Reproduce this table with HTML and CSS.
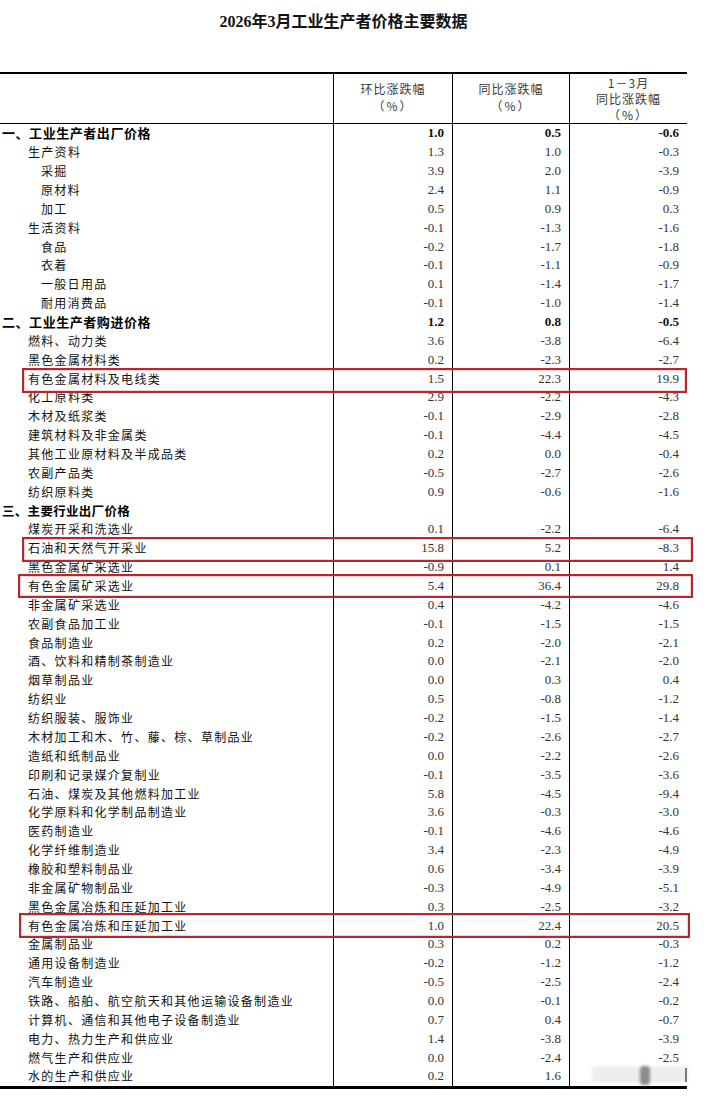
FILE: index.html
```html
<!DOCTYPE html>
<html lang="zh-CN">
<head>
<meta charset="utf-8">
<title>2026年3月工业生产者价格主要数据</title>
<link rel="stylesheet" href="styles.css">
</head>
<body>
<div class="sheet">
  <h1 class="title">2026年3月工业生产者价格主要数据</h1>
  <table class="ppi">
    <colgroup>
      <col class="c-label"><col class="c-a"><col class="c-b"><col class="c-c">
    </colgroup>
    <thead>
      <tr>
        <th class="h-label"></th>
        <th><span class="hd">环比涨跌幅<br><span class="pct">（%）</span></span></th>
        <th><span class="hd">同比涨跌幅<br><span class="pct">（%）</span></span></th>
        <th>1－3月<br>同比涨跌幅<br><span class="pct">（%）</span></th>
      </tr>
    </thead>
    <tbody>
      <tr class="sec"><td class="lab l0">一、工业生产者出厂价格</td><td>1.0</td><td>0.5</td><td>-0.6</td></tr>
      <tr><td class="lab l1">生产资料</td><td>1.3</td><td>1.0</td><td>-0.3</td></tr>
      <tr><td class="lab l2">采掘</td><td>3.9</td><td>2.0</td><td>-3.9</td></tr>
      <tr><td class="lab l2">原材料</td><td>2.4</td><td>1.1</td><td>-0.9</td></tr>
      <tr><td class="lab l2">加工</td><td>0.5</td><td>0.9</td><td>0.3</td></tr>
      <tr><td class="lab l1">生活资料</td><td>-0.1</td><td>-1.3</td><td>-1.6</td></tr>
      <tr><td class="lab l2">食品</td><td>-0.2</td><td>-1.7</td><td>-1.8</td></tr>
      <tr><td class="lab l2">衣着</td><td>-0.1</td><td>-1.1</td><td>-0.9</td></tr>
      <tr><td class="lab l2">一般日用品</td><td>0.1</td><td>-1.4</td><td>-1.7</td></tr>
      <tr><td class="lab l2">耐用消费品</td><td>-0.1</td><td>-1.0</td><td>-1.4</td></tr>
      <tr class="sec"><td class="lab l0">二、工业生产者购进价格</td><td>1.2</td><td>0.8</td><td>-0.5</td></tr>
      <tr><td class="lab l1">燃料、动力类</td><td>3.6</td><td>-3.8</td><td>-6.4</td></tr>
      <tr><td class="lab l1">黑色金属材料类</td><td>0.2</td><td>-2.3</td><td>-2.7</td></tr>
      <tr><td class="lab l1">有色金属材料及电线类</td><td>1.5</td><td>22.3</td><td>19.9</td></tr>
      <tr><td class="lab l1">化工原料类</td><td>2.9</td><td>-2.2</td><td>-4.3</td></tr>
      <tr><td class="lab l1">木材及纸浆类</td><td>-0.1</td><td>-2.9</td><td>-2.8</td></tr>
      <tr><td class="lab l1">建筑材料及非金属类</td><td>-0.1</td><td>-4.4</td><td>-4.5</td></tr>
      <tr><td class="lab l1">其他工业原材料及半成品类</td><td>0.2</td><td>0.0</td><td>-0.4</td></tr>
      <tr><td class="lab l1">农副产品类</td><td>-0.5</td><td>-2.7</td><td>-2.6</td></tr>
      <tr><td class="lab l1">纺织原料类</td><td>0.9</td><td>-0.6</td><td>-1.6</td></tr>
      <tr class="sec"><td class="lab l0 s3">三、主要行业出厂价格</td><td></td><td></td><td></td></tr>
      <tr><td class="lab l1">煤炭开采和洗选业</td><td>0.1</td><td>-2.2</td><td>-6.4</td></tr>
      <tr><td class="lab l1">石油和天然气开采业</td><td>15.8</td><td>5.2</td><td>-8.3</td></tr>
      <tr><td class="lab l1">黑色金属矿采选业</td><td>-0.9</td><td>0.1</td><td>1.4</td></tr>
      <tr><td class="lab l1">有色金属矿采选业</td><td>5.4</td><td>36.4</td><td>29.8</td></tr>
      <tr><td class="lab l1">非金属矿采选业</td><td>0.4</td><td>-4.2</td><td>-4.6</td></tr>
      <tr><td class="lab l1">农副食品加工业</td><td>-0.1</td><td>-1.5</td><td>-1.5</td></tr>
      <tr><td class="lab l1">食品制造业</td><td>0.2</td><td>-2.0</td><td>-2.1</td></tr>
      <tr><td class="lab l1">酒、饮料和精制茶制造业</td><td>0.0</td><td>-2.1</td><td>-2.0</td></tr>
      <tr><td class="lab l1">烟草制品业</td><td>0.0</td><td>0.3</td><td>0.4</td></tr>
      <tr><td class="lab l1">纺织业</td><td>0.5</td><td>-0.8</td><td>-1.2</td></tr>
      <tr><td class="lab l1">纺织服装、服饰业</td><td>-0.2</td><td>-1.5</td><td>-1.4</td></tr>
      <tr><td class="lab l1">木材加工和木、竹、藤、棕、草制品业</td><td>-0.2</td><td>-2.6</td><td>-2.7</td></tr>
      <tr><td class="lab l1">造纸和纸制品业</td><td>0.0</td><td>-2.2</td><td>-2.6</td></tr>
      <tr><td class="lab l1">印刷和记录媒介复制业</td><td>-0.1</td><td>-3.5</td><td>-3.6</td></tr>
      <tr><td class="lab l1">石油、煤炭及其他燃料加工业</td><td>5.8</td><td>-4.5</td><td>-9.4</td></tr>
      <tr><td class="lab l1">化学原料和化学制品制造业</td><td>3.6</td><td>-0.3</td><td>-3.0</td></tr>
      <tr><td class="lab l1">医药制造业</td><td>-0.1</td><td>-4.6</td><td>-4.6</td></tr>
      <tr><td class="lab l1">化学纤维制造业</td><td>3.4</td><td>-2.3</td><td>-4.9</td></tr>
      <tr><td class="lab l1">橡胶和塑料制品业</td><td>0.6</td><td>-3.4</td><td>-3.9</td></tr>
      <tr><td class="lab l1">非金属矿物制品业</td><td>-0.3</td><td>-4.9</td><td>-5.1</td></tr>
      <tr><td class="lab l1">黑色金属冶炼和压延加工业</td><td>0.3</td><td>-2.5</td><td>-3.2</td></tr>
      <tr><td class="lab l1">有色金属冶炼和压延加工业</td><td>1.0</td><td>22.4</td><td>20.5</td></tr>
      <tr><td class="lab l1">金属制品业</td><td>0.3</td><td>0.2</td><td>-0.3</td></tr>
      <tr><td class="lab l1">通用设备制造业</td><td>-0.2</td><td>-1.2</td><td>-1.2</td></tr>
      <tr><td class="lab l1">汽车制造业</td><td>-0.5</td><td>-2.5</td><td>-2.4</td></tr>
      <tr><td class="lab l1">铁路、船舶、航空航天和其他运输设备制造业</td><td>0.0</td><td>-0.1</td><td>-0.2</td></tr>
      <tr><td class="lab l1">计算机、通信和其他电子设备制造业</td><td>0.7</td><td>0.4</td><td>-0.7</td></tr>
      <tr><td class="lab l1">电力、热力生产和供应业</td><td>1.4</td><td>-3.8</td><td>-3.9</td></tr>
      <tr><td class="lab l1">燃气生产和供应业</td><td>0.0</td><td>-2.4</td><td>-2.5</td></tr>
      <tr class="last"><td class="lab l1">水的生产和供应业</td><td>0.2</td><td>1.6</td><td></td></tr>
    </tbody>
  </table>

  <div class="mark m1"></div>
  <div class="mark m2"></div>
  <div class="mark m3"></div>
  <div class="mark m4"></div>

  <div class="watermark"><span class="wm-bar"></span><span class="wm-blob"></span><span class="wm-end"></span></div>
</div>
</body>
</html>
```

FILE: styles.css
```css
html, body {
  margin: 0;
  padding: 0;
  background: #ffffff;
}

.sheet {
  position: relative;
  width: 706px;
}

.title {
  margin: 0;
  width: 687px;
  padding-top: 12px;
  height: 20px;
  line-height: 20px;
  margin-bottom: 40px;
  text-align: center;
  font-family: "Liberation Serif", "Noto Sans CJK SC", serif;
  font-size: 16px;
  font-weight: bold;
  color: #111;
}

.ppi {
  width: 687px;
  border-spacing: 0;
  table-layout: fixed;
  border-bottom: 3px solid #000;
}

.c-label { width: 333px; }
.c-a { width: 119px; }
.c-b { width: 117px; }
.c-c { width: 118px; }

.ppi th {
  height: 49px;
  padding: 0;
  border-top: 2px solid #000;
  border-bottom: 1px solid #000;
  font-family: "Noto Sans CJK SC", sans-serif;
  font-weight: normal;
  font-size: 12px;
  letter-spacing: 1px;
  line-height: 16px;
  color: #3a3a3a;
  text-align: center;
  vertical-align: middle;
}

.hd {
  display: inline-block;
  line-height: 17px;
  margin-top: -4px;
}

.ppi th + th,
.ppi td + td {
  border-left: 1px solid #000;
}

.pct {
  letter-spacing: 2px;
}

.ppi td {
  height: 18.86px;
  padding: 0 8px 0 0;
  line-height: 18px;
  font-family: "Liberation Serif", serif;
  font-size: 13px;
  color: #333;
  text-align: right;
  white-space: nowrap;
  vertical-align: middle;
}

.ppi td.lab {
  text-align: left;
  font-family: "Noto Sans CJK SC", sans-serif;
  font-size: 12px;
  letter-spacing: 1.3px;
  color: #111;
  padding: 0;
}

.l0 { padding-left: 2px !important; }
.l1 { padding-left: 28px !important; }
.l2 { padding-left: 41px !important; }

.sec td {
  font-weight: bold;
  color: #111;
}

.sec td.lab {
  font-size: 13px;
  letter-spacing: 0.55px;
  color: #000;
}

.sec td.s3 {
  font-size: 12.5px;
  letter-spacing: 0.3px;
}

/* red annotation boxes drawn over the table */
.mark {
  position: absolute;
  border: 2px solid #b8272f;
  box-shadow: inset 0 0 0 1px rgba(200, 80, 90, 0.25);
  box-sizing: border-box;
}
.m1 { left: 22px; top: 368px; width: 665px; height: 25px; }
.m2 { left: 22px; top: 537px; width: 671px; height: 25px; }
.m3 { left: 18px; top: 574px; width: 675px; height: 24px; }
.m4 { left: 19px; top: 913px; width: 671px; height: 25px; }

/* faint watermark over the bottom-right cell */
.watermark {
  position: absolute;
  left: 592px;
  top: 1065px;
  width: 100px;
  height: 20px;
}
.wm-bar {
  position: absolute;
  left: 0;
  top: 2px;
  width: 96px;
  height: 16px;
  background: repeating-linear-gradient(to bottom, #e6e6e6 0, #e6e6e6 2px, #f6f6f6 2px, #f6f6f6 4px);
  filter: blur(1.5px);
}
.wm-blob {
  position: absolute;
  left: 48px;
  top: 1px;
  width: 10px;
  height: 19px;
  border-radius: 4px;
  background: #8a8a8a;
  filter: blur(1.5px);
}
.wm-end {
  position: absolute;
  left: 93px;
  top: 3px;
  width: 2px;
  height: 14px;
  background: #777;
  filter: blur(0.5px);
}
```
